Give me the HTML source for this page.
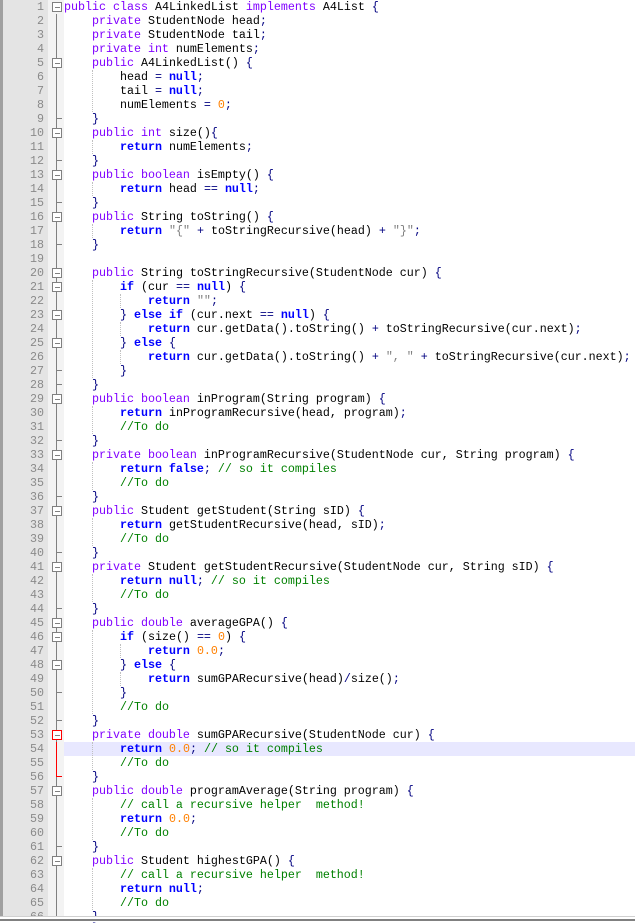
<!DOCTYPE html>
<html><head><meta charset="utf-8"><style>
body{margin:0;width:635px;height:921px;overflow:hidden;background:#fff;position:relative;font-family:"Liberation Mono",monospace;font-size:11.67px}
#lb{position:absolute;left:0;top:0;width:3px;height:921px;background:#a0a0a0}
#nm{position:absolute;left:3px;top:0;width:45px;height:916px;background:#e4e4e4}
#fm{position:absolute;left:48px;top:0;width:16px;height:916px;background:#f3f3f3}
#vl{position:absolute;left:56px;top:14px;width:1px;height:902px;background:#808080}
.bx{position:absolute;left:52px;width:8px;height:8px;border:1px solid #808080;background:#fff}
.bx:after{content:"";position:absolute;left:2px;top:4px;width:5px;height:1px;background:#808080}
.tk{position:absolute;left:56px;width:6px;height:1px;background:#808080}
.ln{position:absolute;left:3px;width:41px;text-align:right;color:#8a8a8a;height:14px;line-height:14px}
.cl{position:absolute;left:64px;height:14px;line-height:14px;white-space:pre;color:#000;width:571px}
.ig{position:absolute;width:0;border-left:1px dotted #c0c0c0}
.p{color:#8000ff}.b{color:#0000ff;font-weight:bold}.o{color:#000080}.n{color:#ff8000}.c{color:#008000}.s{color:#808080}
#bot{position:absolute;left:0;top:916px;width:635px;height:5px;background:#fff;border-top:1px solid #d0d0d0}
#bot:after{content:"";position:absolute;left:0;top:2px;width:635px;height:2px;background:#808080}
</style></head><body>
<div id="lb"></div><div id="nm"></div><div id="fm"></div>
<div style="position:absolute;left:64px;top:742px;width:571px;height:14px;background:#e8e8ff"></div>
<div class="ig" style="left:92px;top:70px;height:42px"></div>
<div class="ig" style="left:92px;top:140px;height:14px"></div>
<div class="ig" style="left:92px;top:182px;height:14px"></div>
<div class="ig" style="left:92px;top:224px;height:14px"></div>
<div class="ig" style="left:92px;top:280px;height:98px"></div>
<div class="ig" style="left:120px;top:294px;height:14px"></div>
<div class="ig" style="left:120px;top:322px;height:14px"></div>
<div class="ig" style="left:120px;top:350px;height:14px"></div>
<div class="ig" style="left:92px;top:406px;height:28px"></div>
<div class="ig" style="left:92px;top:462px;height:28px"></div>
<div class="ig" style="left:92px;top:518px;height:28px"></div>
<div class="ig" style="left:92px;top:574px;height:28px"></div>
<div class="ig" style="left:92px;top:630px;height:84px"></div>
<div class="ig" style="left:120px;top:644px;height:14px"></div>
<div class="ig" style="left:120px;top:672px;height:14px"></div>
<div class="ig" style="left:92px;top:742px;height:28px"></div>
<div class="ig" style="left:92px;top:798px;height:42px"></div>
<div class="ig" style="left:92px;top:868px;height:42px"></div>
<div id="vl"></div>
<div style="position:absolute;left:56px;top:742px;width:1px;height:35px;background:#ff0000"></div>
<div style="position:absolute;left:56px;top:776px;width:6px;height:1px;background:#ff0000"></div>
<div class="bx" style="top:2px"></div><div class="bx" style="top:58px"></div><div class="bx" style="top:128px"></div><div class="bx" style="top:170px"></div><div class="bx" style="top:212px"></div><div class="bx" style="top:268px"></div><div class="bx" style="top:282px"></div><div class="bx" style="top:310px"></div><div class="bx" style="top:338px"></div><div class="bx" style="top:394px"></div><div class="bx" style="top:450px"></div><div class="bx" style="top:506px"></div><div class="bx" style="top:562px"></div><div class="bx" style="top:618px"></div><div class="bx" style="top:632px"></div><div class="bx" style="top:660px"></div><div class="bx" style="top:786px"></div><div class="bx" style="top:856px"></div>
<div class="bx" style="top:730px;border-color:#ff0000"></div>
<div class="tk" style="top:118px"></div><div class="tk" style="top:160px"></div><div class="tk" style="top:202px"></div><div class="tk" style="top:244px"></div><div class="tk" style="top:370px"></div><div class="tk" style="top:384px"></div><div class="tk" style="top:440px"></div><div class="tk" style="top:496px"></div><div class="tk" style="top:552px"></div><div class="tk" style="top:608px"></div><div class="tk" style="top:692px"></div><div class="tk" style="top:720px"></div><div class="tk" style="top:846px"></div>
<div class="ln" style="top:0">1</div><div class="ln" style="top:14px">2</div><div class="ln" style="top:28px">3</div><div class="ln" style="top:42px">4</div><div class="ln" style="top:56px">5</div><div class="ln" style="top:70px">6</div><div class="ln" style="top:84px">7</div><div class="ln" style="top:98px">8</div><div class="ln" style="top:112px">9</div><div class="ln" style="top:126px">10</div><div class="ln" style="top:140px">11</div><div class="ln" style="top:154px">12</div><div class="ln" style="top:168px">13</div><div class="ln" style="top:182px">14</div><div class="ln" style="top:196px">15</div><div class="ln" style="top:210px">16</div><div class="ln" style="top:224px">17</div><div class="ln" style="top:238px">18</div><div class="ln" style="top:252px">19</div><div class="ln" style="top:266px">20</div><div class="ln" style="top:280px">21</div><div class="ln" style="top:294px">22</div><div class="ln" style="top:308px">23</div><div class="ln" style="top:322px">24</div><div class="ln" style="top:336px">25</div><div class="ln" style="top:350px">26</div><div class="ln" style="top:364px">27</div><div class="ln" style="top:378px">28</div><div class="ln" style="top:392px">29</div><div class="ln" style="top:406px">30</div><div class="ln" style="top:420px">31</div><div class="ln" style="top:434px">32</div><div class="ln" style="top:448px">33</div><div class="ln" style="top:462px">34</div><div class="ln" style="top:476px">35</div><div class="ln" style="top:490px">36</div><div class="ln" style="top:504px">37</div><div class="ln" style="top:518px">38</div><div class="ln" style="top:532px">39</div><div class="ln" style="top:546px">40</div><div class="ln" style="top:560px">41</div><div class="ln" style="top:574px">42</div><div class="ln" style="top:588px">43</div><div class="ln" style="top:602px">44</div><div class="ln" style="top:616px">45</div><div class="ln" style="top:630px">46</div><div class="ln" style="top:644px">47</div><div class="ln" style="top:658px">48</div><div class="ln" style="top:672px">49</div><div class="ln" style="top:686px">50</div><div class="ln" style="top:700px">51</div><div class="ln" style="top:714px">52</div><div class="ln" style="top:728px">53</div><div class="ln" style="top:742px">54</div><div class="ln" style="top:756px">55</div><div class="ln" style="top:770px">56</div><div class="ln" style="top:784px">57</div><div class="ln" style="top:798px">58</div><div class="ln" style="top:812px">59</div><div class="ln" style="top:826px">60</div><div class="ln" style="top:840px">61</div><div class="ln" style="top:854px">62</div><div class="ln" style="top:868px">63</div><div class="ln" style="top:882px">64</div><div class="ln" style="top:896px">65</div><div class="ln" style="top:910px">66</div>
<div class="cl" style="top:0"><span class="p">public class</span> A4LinkedList <span class="p">implements</span> A4List <span class="o">{</span></div>
<div class="cl" style="top:14px">    <span class="p">private</span> StudentNode head<span class="o">;</span></div>
<div class="cl" style="top:28px">    <span class="p">private</span> StudentNode tail<span class="o">;</span></div>
<div class="cl" style="top:42px">    <span class="p">private int</span> numElements<span class="o">;</span></div>
<div class="cl" style="top:56px">    <span class="p">public</span> A4LinkedList() <span class="o">{</span></div>
<div class="cl" style="top:70px">        head <span class="o">=</span> <span class="b">null</span><span class="o">;</span></div>
<div class="cl" style="top:84px">        tail <span class="o">=</span> <span class="b">null</span><span class="o">;</span></div>
<div class="cl" style="top:98px">        numElements <span class="o">=</span> <span class="n">0</span><span class="o">;</span></div>
<div class="cl" style="top:112px">    <span class="o">}</span></div>
<div class="cl" style="top:126px">    <span class="p">public int</span> size()<span class="o">{</span></div>
<div class="cl" style="top:140px">        <span class="b">return</span> numElements<span class="o">;</span></div>
<div class="cl" style="top:154px">    <span class="o">}</span></div>
<div class="cl" style="top:168px">    <span class="p">public boolean</span> isEmpty() <span class="o">{</span></div>
<div class="cl" style="top:182px">        <span class="b">return</span> head <span class="o">==</span> <span class="b">null</span><span class="o">;</span></div>
<div class="cl" style="top:196px">    <span class="o">}</span></div>
<div class="cl" style="top:210px">    <span class="p">public</span> String toString() <span class="o">{</span></div>
<div class="cl" style="top:224px">        <span class="b">return</span> <span class="s">"{"</span> <span class="o">+</span> toStringRecursive(head) <span class="o">+</span> <span class="s">"}"</span><span class="o">;</span></div>
<div class="cl" style="top:238px">    <span class="o">}</span></div>
<div class="cl" style="top:266px">    <span class="p">public</span> String toStringRecursive(StudentNode cur) <span class="o">{</span></div>
<div class="cl" style="top:280px">        <span class="b">if</span> (cur <span class="o">==</span> <span class="b">null</span>) <span class="o">{</span></div>
<div class="cl" style="top:294px">            <span class="b">return</span> <span class="s">""</span><span class="o">;</span></div>
<div class="cl" style="top:308px">        <span class="o">}</span> <span class="b">else if</span> (cur.next <span class="o">==</span> <span class="b">null</span>) <span class="o">{</span></div>
<div class="cl" style="top:322px">            <span class="b">return</span> cur.getData().toString() <span class="o">+</span> toStringRecursive(cur.next)<span class="o">;</span></div>
<div class="cl" style="top:336px">        <span class="o">}</span> <span class="b">else</span> <span class="o">{</span></div>
<div class="cl" style="top:350px">            <span class="b">return</span> cur.getData().toString() <span class="o">+</span> <span class="s">", "</span> <span class="o">+</span> toStringRecursive(cur.next)<span class="o">;</span></div>
<div class="cl" style="top:364px">        <span class="o">}</span></div>
<div class="cl" style="top:378px">    <span class="o">}</span></div>
<div class="cl" style="top:392px">    <span class="p">public boolean</span> inProgram(String program) <span class="o">{</span></div>
<div class="cl" style="top:406px">        <span class="b">return</span> inProgramRecursive(head, program)<span class="o">;</span></div>
<div class="cl" style="top:420px">        <span class="c">//To do</span></div>
<div class="cl" style="top:434px">    <span class="o">}</span></div>
<div class="cl" style="top:448px">    <span class="p">private boolean</span> inProgramRecursive(StudentNode cur, String program) <span class="o">{</span></div>
<div class="cl" style="top:462px">        <span class="b">return false</span><span class="o">;</span> <span class="c">// so it compiles</span></div>
<div class="cl" style="top:476px">        <span class="c">//To do</span></div>
<div class="cl" style="top:490px">    <span class="o">}</span></div>
<div class="cl" style="top:504px">    <span class="p">public</span> Student getStudent(String sID) <span class="o">{</span></div>
<div class="cl" style="top:518px">        <span class="b">return</span> getStudentRecursive(head, sID)<span class="o">;</span></div>
<div class="cl" style="top:532px">        <span class="c">//To do</span></div>
<div class="cl" style="top:546px">    <span class="o">}</span></div>
<div class="cl" style="top:560px">    <span class="p">private</span> Student getStudentRecursive(StudentNode cur, String sID) <span class="o">{</span></div>
<div class="cl" style="top:574px">        <span class="b">return null</span><span class="o">;</span> <span class="c">// so it compiles</span></div>
<div class="cl" style="top:588px">        <span class="c">//To do</span></div>
<div class="cl" style="top:602px">    <span class="o">}</span></div>
<div class="cl" style="top:616px">    <span class="p">public double</span> averageGPA() <span class="o">{</span></div>
<div class="cl" style="top:630px">        <span class="b">if</span> (size() <span class="o">==</span> <span class="n">0</span>) <span class="o">{</span></div>
<div class="cl" style="top:644px">            <span class="b">return</span> <span class="n">0.0</span><span class="o">;</span></div>
<div class="cl" style="top:658px">        <span class="o">}</span> <span class="b">else</span> <span class="o">{</span></div>
<div class="cl" style="top:672px">            <span class="b">return</span> sumGPARecursive(head)<span class="o">/</span>size()<span class="o">;</span></div>
<div class="cl" style="top:686px">        <span class="o">}</span></div>
<div class="cl" style="top:700px">        <span class="c">//To do</span></div>
<div class="cl" style="top:714px">    <span class="o">}</span></div>
<div class="cl" style="top:728px">    <span class="p">private double</span> sumGPARecursive(StudentNode cur) <span class="o">{</span></div>
<div class="cl" style="top:742px">        <span class="b">return</span> <span class="n">0.0</span><span class="o">;</span> <span class="c">// so it compiles</span></div>
<div class="cl" style="top:756px">        <span class="c">//To do</span></div>
<div class="cl" style="top:770px">    <span class="o">}</span></div>
<div class="cl" style="top:784px">    <span class="p">public double</span> programAverage(String program) <span class="o">{</span></div>
<div class="cl" style="top:798px">        <span class="c">// call a recursive helper  method!</span></div>
<div class="cl" style="top:812px">        <span class="b">return</span> <span class="n">0.0</span><span class="o">;</span></div>
<div class="cl" style="top:826px">        <span class="c">//To do</span></div>
<div class="cl" style="top:840px">    <span class="o">}</span></div>
<div class="cl" style="top:854px">    <span class="p">public</span> Student highestGPA() <span class="o">{</span></div>
<div class="cl" style="top:868px">        <span class="c">// call a recursive helper  method!</span></div>
<div class="cl" style="top:882px">        <span class="b">return null</span><span class="o">;</span></div>
<div class="cl" style="top:896px">        <span class="c">//To do</span></div>
<div class="cl" style="top:910px">    <span class="o">}</span></div>
<div id="bot"></div>
</body></html>
